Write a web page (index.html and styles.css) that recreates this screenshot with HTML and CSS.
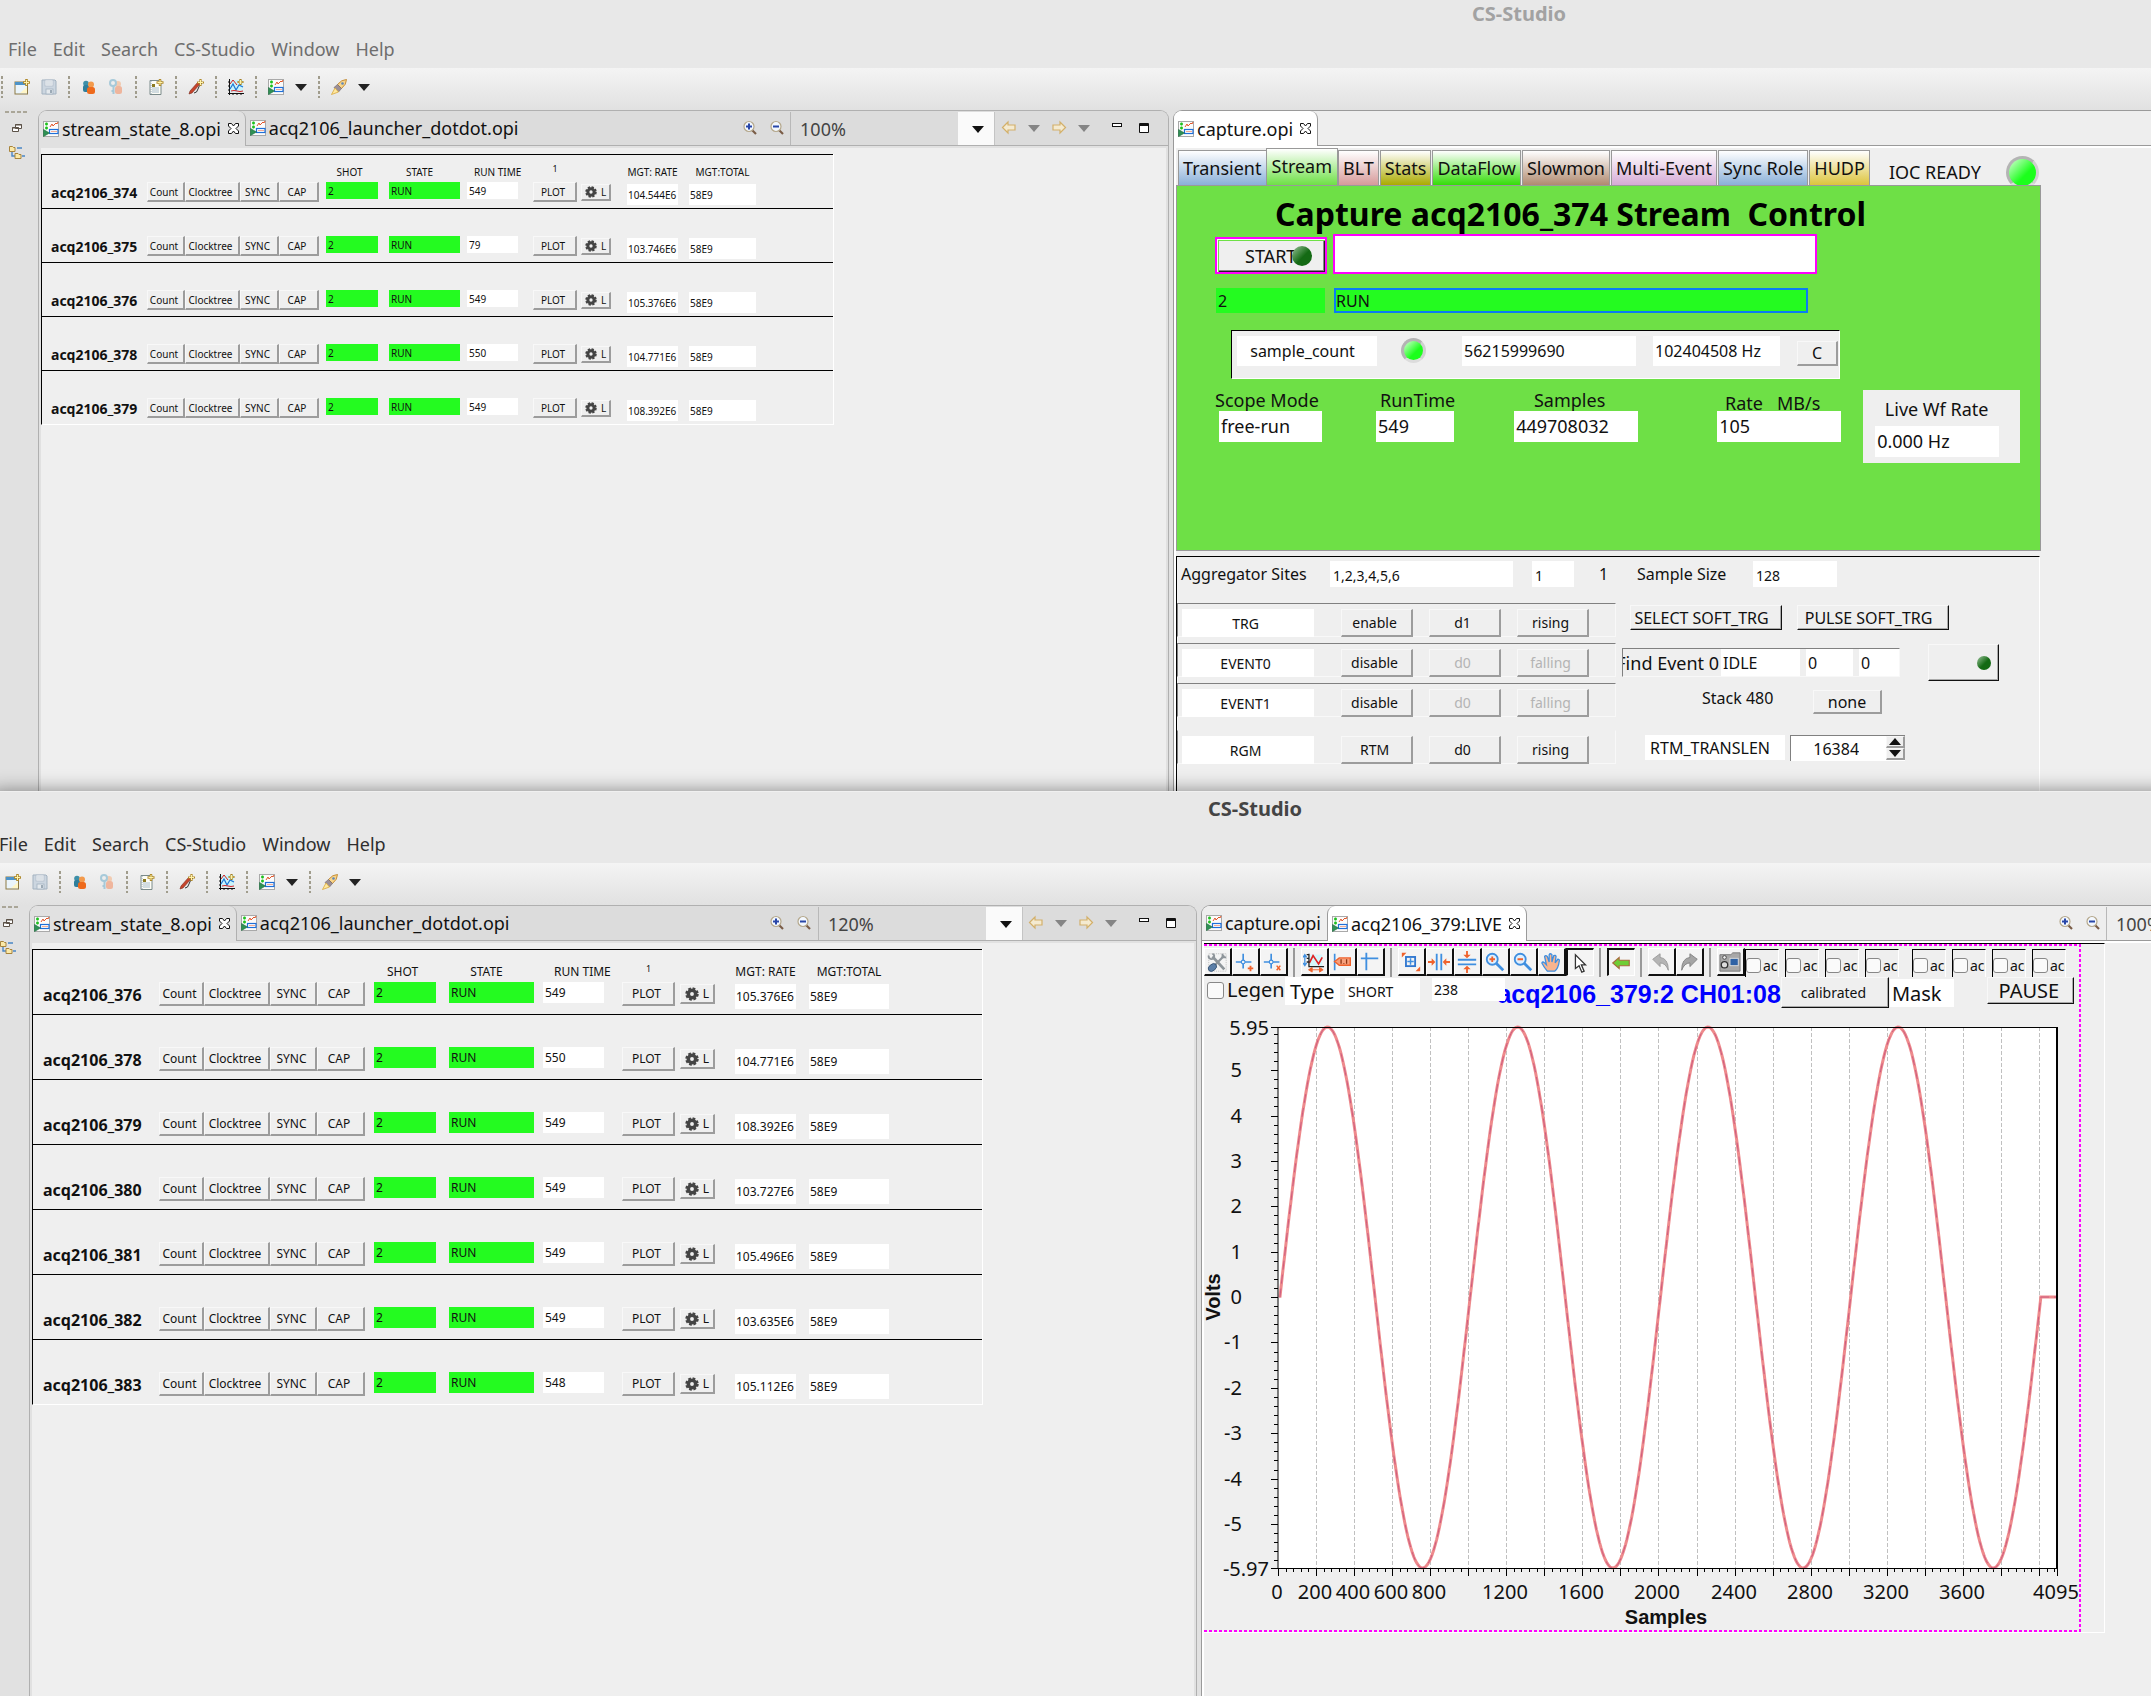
FILE: index.html
```html
<!DOCTYPE html>
<html lang="en">
<head>
<meta charset="UTF-8">
<meta name="viewport" content="width=device-width, initial-scale=1.0">
<title>CS-Studio</title>
<link rel="stylesheet" href="styles.css">
</head>
<body>

<!-- icon sprites -->
<svg class="sprites" aria-hidden="true">
  <symbol id="i-opi" viewBox="0 0 16 16"><rect x=".5" y=".5" width="15" height="15" fill="#fbfbfb" stroke="#a9a9a9"/><path d="M7 6l2-3 1 2 3-3 1 1 1-2" fill="none" stroke="#e2562a" stroke-width="1"/><path d="M2 3h3M3.500 1.500v3M2 7h3M3.500 5.500v3" stroke="#1fc01f" stroke-width="1.600"/><rect x="6.500" y="8.500" width="8.500" height="4" fill="#fff" stroke="#1e6fd8" stroke-width="1.200"/><path d="M8.500 10.500h5" stroke="#e2562a" stroke-dasharray="1 1"/><path d="M.5 8.500v7l6-3.500z" fill="#2e9154" stroke="#1d6b3c" stroke-width=".6"/></symbol>
  <symbol id="i-new" viewBox="0 0 16 16"><rect x="1" y="3" width="12.500" height="12" fill="#eaf4fb" stroke="#8d7a45"/><path d="M1 3h12v3H1z" fill="#4d93c8"/><path d="M6 14l7-6v6z" fill="#fff6c8"/><path d="M12.500 0v7M9 3.500h7" stroke="#b08a2c" stroke-width="2.600"/><path d="M12.500 1v5M10 3.500h5" stroke="#fff3a8" stroke-width="1"/></symbol>
  <symbol id="i-save" viewBox="0 0 16 16"><path d="M1 1h13l1 1v13H1z" fill="#ccd6e0" stroke="#a3b2c0"/><rect x="4" y="1" width="8" height="6" fill="#eef2f5" stroke="#b3bfca" stroke-width=".8"/><path d="M5 3h6M5 5h6" stroke="#b9c4ce" stroke-width=".7"/><rect x="5" y="10" width="7" height="5" fill="#e4e9ed" stroke="#a3b2c0" stroke-width=".8"/><rect x="9" y="11" width="2" height="3" fill="#9caab6"/></symbol>
  <symbol id="i-users" viewBox="0 0 16 16"><circle cx="5" cy="4.500" r="2.800" fill="#3d8fa8"/><rect x="2" y="6" width="6.500" height="7" rx="2" fill="#2f7f9c"/><circle cx="10" cy="5.500" r="3" fill="#f39a4c"/><rect x="6" y="8" width="8" height="7" rx="2.500" fill="#ee6a1c"/></symbol>
  <symbol id="i-userkey" viewBox="0 0 16 16"><g opacity=".6"><circle cx="10" cy="5" r="3" fill="#f5b58a"/><rect x="7" y="7" width="7" height="8" rx="2.500" fill="#f3936a"/><circle cx="5" cy="4" r="3" fill="none" stroke="#79b3cd" stroke-width="2"/><path d="M5.500 7v8M5.500 12h-2" stroke="#79b3cd" stroke-width="2"/></g></symbol>
  <symbol id="i-doc" viewBox="0 0 16 16"><path d="M2 1.500h11v14H2z" fill="#fdfdf6" stroke="#7a8a8a"/><path d="M4 9h7M4 11h7M4 13h7" stroke="#a8bccb"/><rect x="4" y="5" width="3" height="3" fill="#8b7a20"/><path d="M3 2v13" stroke="#9ab" stroke-dasharray="1 1"/><path d="M12 0v7M8.500 3.500h7" stroke="#b08a2c" stroke-width="2.400"/><path d="M12 1v5M9.500 3.500h5" stroke="#fff3a8"/></symbol>
  <symbol id="i-pen" viewBox="0 0 16 16"><path d="M1 15l1-3 8-9 2 2-8 9z" fill="#c6442c" stroke="#7a2a1c" stroke-width=".6"/><path d="M6 14q3 0 4-4t4-6" fill="none" stroke="#333"/><path d="M12.500 0v7M9 3.500h7" stroke="#b08a2c" stroke-width="2.200"/><path d="M12.500 1v5M10 3.500h5" stroke="#fff3a8"/></symbol>
  <symbol id="i-chart" viewBox="0 0 16 16"><rect x="2" y="1" width="13" height="12" fill="#c9f4fb"/><path d="M1.500 0v16M0 14.500h16M0 3h2M0 7h2M0 11h2M5 14v2M9 14v2M13 14v2" stroke="#111"/><path d="M2 5l3-4 4 5" fill="none" stroke="#d81f1f"/><path d="M2 10l3-5 3 6 3-5 4 2" fill="none" stroke="#1b74d6" stroke-width="1.200"/><path d="M3 12q3-1 6 0t6 0" fill="none" stroke="#d81f1f"/><path d="M12.500 0v6M9.500 3h6" stroke="#a37d22" stroke-width="2.200"/><path d="M12.500 1v4M10.500 3h4" stroke="#fff3a8"/></symbol>
  <symbol id="i-rocket" viewBox="0 0 16 16"><path d="M15.500.5q-5 0-9 5l4 4q5-4 5-9z" fill="#f9d58a" stroke="#b77a1f" stroke-width=".8"/><path d="M6.500 5.500L3 8.500 7.500 13l3-3.500z" fill="#9b8f97" stroke="#6d636b" stroke-width=".6"/><path d="M4 9l-3.500 6.500L7.500 13z" fill="#ffe9a0" stroke="#d9a83a" stroke-width=".8"/><circle cx="11.500" cy="4.500" r="1.300" fill="#5d87b8"/></symbol>
  <symbol id="i-tri" viewBox="0 0 12 7"><path d="M0 0h12L6 7z" fill="currentColor"/></symbol>
  <symbol id="i-zin" viewBox="0 0 16 16"><path d="M10 10l4 4" stroke="#7a5c46" stroke-width="2.200"/><circle cx="7" cy="6.500" r="5" fill="#f3f8ff" stroke="#b5a88c" stroke-width="1.200"/><path d="M4 6.500h6M7 3.500v6" stroke="#2846a8" stroke-width="2"/></symbol>
  <symbol id="i-zout" viewBox="0 0 16 16"><path d="M10 10l4 4" stroke="#7a5c46" stroke-width="2.200"/><circle cx="7" cy="6.500" r="5" fill="#f3f8ff" stroke="#b5a88c" stroke-width="1.200"/><path d="M4 6.500h6" stroke="#2846a8" stroke-width="2"/></symbol>
  <symbol id="i-back" viewBox="0 0 16 16"><path d="M1.500 7.500L7 2v3h7v5H7v3z" fill="#f4ead0" stroke="#d3b06a" stroke-width="1.200"/></symbol>
  <symbol id="i-fwd" viewBox="0 0 16 16"><path d="M14.500 7.500L9 2v3H2v5h7v3z" fill="#f4ead0" stroke="#d3b06a" stroke-width="1.200"/></symbol>
  <symbol id="i-min" viewBox="0 0 16 16"><rect x="3.500" y="3.500" width="9" height="3" fill="#fff" stroke="#111"/></symbol>
  <symbol id="i-max" viewBox="0 0 16 16"><path d="M3.500 3.500h9v9h-9z" fill="#fff" stroke="#111"/><path d="M3 5h10" stroke="#111" stroke-width="2"/></symbol>
  <symbol id="i-close" viewBox="0 0 11 11"><path d="M.5.5h3l2 2.500 2-2.500h3v2.500L8 5.500l2.500 2.500v2.500h-3l-2-2.500-2 2.500h-3V8L3 5.500.5 3z" fill="#fff" stroke="#111"/></symbol>
  <symbol id="i-restore" viewBox="0 0 10 10"><path d="M3.500 1.500h6v4h-6zM.5 4.500h6v4h-6z" fill="#fff" stroke="#5c5248"/><path d="M3 2h7M0 5h7" stroke="#5c5248"/></symbol>
  <symbol id="i-tree" viewBox="0 0 16 14"><path d="M3 4v7h3M8 3h5M13 11h3" fill="none" stroke="#4a86c5" stroke-width="1.400"/><path d="M.5 1.500h3l1 1h1.500v4H.5zM6 8.500h3l1 1h2v4H6z" fill="#fbe9a8" stroke="#a8843c"/></symbol>
  <symbol id="i-gear" viewBox="0 0 16 16"><circle cx="8" cy="8" r="4.200" fill="none" stroke="#444" stroke-width="4"/><circle cx="8" cy="8" r="6.500" fill="none" stroke="#444" stroke-width="2.400" stroke-dasharray="3.100 2"/></symbol>
  <!-- graph toolbar -->
  <symbol id="g-tools" viewBox="0 0 24 24"><rect x="3" y="3" width="19" height="19" fill="none" stroke="#bbb" stroke-dasharray="1 1"/><path d="M7 6l13 14" stroke="#8e959a" stroke-width="3"/><path d="M20 5L9 16" stroke="#8e959a" stroke-width="2.400"/><ellipse cx="7" cy="18" rx="5" ry="3.500" transform="rotate(-40 7 18)" fill="#5b7fa8" stroke="#3c5878"/><path d="M3 5a3 3 0 1 0 4-2M18 3v4h4" fill="none" stroke="#8e959a" stroke-width="2"/></symbol>
  <symbol id="g-add" viewBox="0 0 24 24"><path d="M10 3v7M10 14v5M2 12h6M12 12h7" stroke="#3f8fe0" stroke-width="1.800"/><circle cx="10" cy="12" r="2" fill="none" stroke="#3f8fe0" stroke-width="1.200"/><path d="M18 16v6M15 19h6" stroke="#f0622c" stroke-width="2"/></symbol>
  <symbol id="g-del" viewBox="0 0 24 24"><path d="M10 3v7M10 14v5M2 12h6M12 12h7" stroke="#3f8fe0" stroke-width="1.800"/><circle cx="10" cy="12" r="2" fill="none" stroke="#3f8fe0" stroke-width="1.200"/><path d="M16 16l4 5M20 16l-4 5" stroke="#f0622c" stroke-width="1.600"/></symbol>
  <symbol id="g-scale" viewBox="0 0 24 24"><rect x="7" y="4" width="14" height="12" fill="#d4f7fb"/><path d="M7 13l4-8 6 9 4-7" fill="none" stroke="#e02222" stroke-width="1.800"/><path d="M6.500 3v14H23M4 4h2M4 8h2M4 12h2" stroke="#222" fill="none" stroke-width="1.400"/><path d="M2 4v12M0 7l2-3 2 3M0 13l2 3 2-3" fill="none" stroke="#3f8fe0" stroke-width="1.400"/><path d="M8 20.500h12M10 18l-4 2.500 4 2.500zM18 18l4 2.500-4 2.500z" fill="#f0622c" stroke="#f0622c"/></symbol>
  <symbol id="g-label" viewBox="0 0 24 24"><path d="M4 3v18" stroke="#3f8fe0" stroke-width="1.800"/><path d="M4 11.500L9 7.500h12v8H9z" fill="#f7a07c" stroke="#f0622c" stroke-width="1.600"/><path d="M11 9v5M17 9v5M14 13v1" stroke="#8c3310" stroke-width="1.400"/></symbol>
  <symbol id="g-axis" viewBox="0 0 24 24"><path d="M8 2v19M2 8h19" stroke="#3f8fe0" stroke-width="2"/></symbol>
  <symbol id="g-box" viewBox="0 0 24 24"><rect x="6.500" y="6.500" width="10" height="10" fill="none" stroke="#2f77d0" stroke-width="2"/><path d="M11.500 8v7M8 11.500h7" stroke="#3f8fe0" stroke-width="1.600"/><path d="M2 2h5L2 7zM22 22h-5l5-5z" fill="#f0622c"/></symbol>
  <symbol id="g-horz" viewBox="0 0 24 24"><path d="M9.500 3v18M14.500 3v18" stroke="#3f8fe0" stroke-width="2"/><path d="M0 11h4V8l4 4-4 4v-3H0zM24 11h-4V8l-4 4 4 4v-3h4z" fill="#f0622c"/></symbol>
  <symbol id="g-vert" viewBox="0 0 24 24"><path d="M2 9.500h20M2 14.500h20" stroke="#3f8fe0" stroke-width="2"/><path d="M11 0v4H8l4 4 4-4h-3V0zM11 24v-4H8l4-4 4 4h-3v4z" fill="#f0622c"/></symbol>
  <symbol id="g-zin" viewBox="0 0 24 24"><path d="M13 13l8 8" stroke="#3f8fe0" stroke-width="3"/><circle cx="9" cy="9" r="6" fill="#dff0ff" stroke="#3f8fe0" stroke-width="2"/><path d="M6 9h6M9 6v6" stroke="#f0622c" stroke-width="2"/></symbol>
  <symbol id="g-zout" viewBox="0 0 24 24"><path d="M13 13l8 8" stroke="#3f8fe0" stroke-width="3"/><circle cx="9" cy="9" r="6" fill="#dff0ff" stroke="#3f8fe0" stroke-width="2"/><path d="M6 9h6" stroke="#f0622c" stroke-width="2"/></symbol>
  <symbol id="g-hand" viewBox="0 0 24 24"><path d="M8 22q-4-5-6-9 1-2 3 0l2 2-2-9q1-2 3 0l2 6V4q1-2 3 0v8l2-7q2-1 2.500 1L16.500 13l3-4q2 0 1.500 2-1 8-5 11z" fill="#f8b48e" stroke="#3f8fe0" stroke-width="1.400"/></symbol>
  <symbol id="g-cursor" viewBox="0 0 24 24"><path d="M7 3v15l4-3 3 7 2.500-1-3-7H18z" fill="#fff" stroke="#333" stroke-width="1.400"/></symbol>
  <symbol id="g-left" viewBox="0 0 24 24"><path d="M3 12l7-6v3h11v6H10v3z" fill="#6fce35" stroke="#a86a3c" stroke-width="1.200"/></symbol>
  <symbol id="g-undo" viewBox="0 0 24 24"><path d="M3 9l8-6v4q9 1 9 14-3-8-9-8v4z" fill="#b5b5b5" stroke="#999"/></symbol>
  <symbol id="g-redo" viewBox="0 0 24 24"><path d="M21 9l-8-6v4q-9 1-9 14 3-8 9-8v4z" fill="#a5a5a5" stroke="#808080"/></symbol>
  <symbol id="g-cam" viewBox="0 0 24 24"><path d="M1 4h12l2-2h8v20H1z" fill="#a8a8a8" stroke="#777"/><rect x="12" y="8" width="9" height="8" fill="#2e62a5" stroke="#ddd"/><circle cx="6" cy="7" r="2" fill="#eee" stroke="#444"/><circle cx="6" cy="15" r="3.500" fill="#ddd" stroke="#333" stroke-width="1.400"/></symbol>
</svg>

<!-- back window -->
<section class="window win-back">
  <header class="titlebar">CS-Studio</header>
  <nav class="menubar"><a href="#">File</a><a href="#">Edit</a><a href="#">Search</a><a href="#">CS-Studio</a><a href="#">Window</a><a href="#">Help</a></nav>
  <div class="toolbar" data-toolbar></div>
  <div class="workbench">
    <aside class="trim">
      <button class="bare" aria-label="Restore"><svg width="10" height="10"><use href="#i-restore"/></svg></button>
      <button class="bare" aria-label="Navigator"><svg width="16" height="14"><use href="#i-tree"/></svg></button>
    </aside>

    <div class="folder">
      <div class="strip">
        <div class="tab on"><svg width="16" height="16"><use href="#i-opi"/></svg>stream_state_8.opi<button class="bare" aria-label="Close"><svg width="11" height="11"><use href="#i-close"/></svg></button></div>
        <div class="tab"><svg width="16" height="16"><use href="#i-opi"/></svg>acq2106_launcher_dotdot.opi</div>
        <div class="strip-tools" data-tools="100%"></div>
      </div>
      <div class="canvas">
        <table class="states">
          <colgroup><col class="c-name"><col class="c-count"><col class="c-clock"><col class="c-sync"><col class="c-cap"><col class="c-shot"><col class="c-state"><col class="c-time"><col class="c-plot"><col class="c-gear"><col class="c-rate"><col class="c-total"><col class="c-rest"></colgroup>
          <thead><tr><th></th><th></th><th></th><th></th><th></th><th class="shot">SHOT</th><th class="state">STATE</th><th class="time">RUN TIME</th><th class="plot">1</th><th></th><th class="rate">MGT: RATE</th><th class="total">MGT:TOTAL</th><th></th></tr></thead>
          <tbody id="statesBack"></tbody>
        </table>
      </div>
    </div>

    <div class="folder active">
      <div class="strip">
        <div class="tab on"><svg width="16" height="16"><use href="#i-opi"/></svg>capture.opi<button class="bare" aria-label="Close"><svg width="11" height="11"><use href="#i-close"/></svg></button></div>
        <div class="strip-tools"></div>
      </div>
      <div class="canvas capture">
        <div class="opi-tabs">
          <button class="t-blue">Transient</button><button class="t-stream">Stream</button><button class="t-blt">BLT</button><button class="t-stats">Stats</button><button class="t-flow">DataFlow</button><button class="t-slow">Slowmon</button><button class="t-multi">Multi-Event</button><button class="t-blue">Sync Role</button><button class="t-hudp">HUDP</button>
          <span class="ioc">IOC READY</span><i class="led led-33"></i>
        </div>
        <div class="stream">
          <h1>Capture acq2106_374 Stream&nbsp; Control</h1>
          <div class="row row-start">
            <button class="start">START<i class="led dark led-20"></i></button>
            <input class="message" type="text" aria-label="Message">
          </div>
          <div class="row row-run"><span class="run-shot">2</span><span class="run-state">RUN</span></div>
          <div class="counter">
            <span class="field w140 center">sample_count</span>
            <i class="led led-25"></i>
            <span class="field w174">56215999690</span>
            <span class="field w127">102404508 Hz</span>
            <button class="btn">C</button>
          </div>
          <div class="row row-rates">
            <div class="stack scope"><span>Scope Mode</span><output class="w103">free-run</output></div>
            <div class="stack runtime"><span>RunTime</span><output class="w78">549</output></div>
            <div class="stack samples"><span>Samples</span><output class="w124">449708032</output></div>
            <div class="stack rate-mb"><span>Rate &nbsp; MB/s</span><output class="w124">105</output></div>
            <div class="live"><span>Live Wf Rate</span><output class="w124">0.000 Hz</output></div>
          </div>
        </div>

        <div class="aggregator">
          <div class="agg-top">
            <label class="agg-label" for="sites">Aggregator Sites</label>
            <input class="sites" id="sites" type="text" value="1,2,3,4,5,6">
            <input class="one" type="text" value="1" aria-label="Site">
            <span class="agg-one">1</span>
            <label class="size-label" for="size">Sample Size</label>
            <input class="size" id="size" type="text" value="128">
          </div>
          <div class="agg-body">
            <div class="groups">
              <div class="group"><span>TRG</span><button class="btn">enable</button><button class="btn">d1</button><button class="btn">rising</button></div>
              <div class="group"><span>EVENT0</span><button class="btn">disable</button><button class="btn" disabled>d0</button><button class="btn" disabled>falling</button></div>
              <div class="group"><span>EVENT1</span><button class="btn">disable</button><button class="btn" disabled>d0</button><button class="btn" disabled>falling</button></div>
              <div class="group last"><span>RGM</span><button class="btn">RTM</button><button class="btn">d0</button><button class="btn">rising</button></div>
            </div>
            <div class="triggers">
              <div class="row soft"><button class="btn hard">SELECT SOFT_TRG</button><button class="btn hard">PULSE SOFT_TRG</button></div>
              <div class="row find">
                <div class="find-box"><span class="find-label">Find Event 0</span><span class="w79">IDLE</span><span class="w47">0</span><span class="w40">0</span></div>
                <button class="btn hard find-btn" aria-label="Find"><i class="led dark led-14"></i></button>
              </div>
              <div class="row stack-row"><span>Stack 480</span><button class="btn">none</button></div>
              <div class="row translen">
                <label for="translen">RTM_TRANSLEN</label>
                <div class="spinner"><input id="translen" type="text" value="16384"><div><button class="btn" aria-label="Up"><svg class="up" width="12" height="7"><use href="#i-tri"/></svg></button><button class="btn" aria-label="Down"><svg width="12" height="7"><use href="#i-tri"/></svg></button></div></div>
              </div>
            </div>
          </div>
        </div>
      </div>
    </div>
  </div>
</section>

<!-- front window -->
<section class="window win-front">
  <header class="titlebar">CS-Studio</header>
  <nav class="menubar"><a href="#">File</a><a href="#">Edit</a><a href="#">Search</a><a href="#">CS-Studio</a><a href="#">Window</a><a href="#">Help</a></nav>
  <div class="toolbar" data-toolbar></div>
  <div class="workbench">
    <aside class="trim">
      <button class="bare" aria-label="Restore"><svg width="10" height="10"><use href="#i-restore"/></svg></button>
      <button class="bare" aria-label="Navigator"><svg width="16" height="14"><use href="#i-tree"/></svg></button>
    </aside>

    <div class="folder">
      <div class="strip">
        <div class="tab on"><svg width="16" height="16"><use href="#i-opi"/></svg>stream_state_8.opi<button class="bare" aria-label="Close"><svg width="11" height="11"><use href="#i-close"/></svg></button></div>
        <div class="tab"><svg width="16" height="16"><use href="#i-opi"/></svg>acq2106_launcher_dotdot.opi</div>
        <div class="strip-tools" data-tools="120%"></div>
      </div>
      <div class="canvas">
        <table class="states zoomed">
          <colgroup><col class="c-name"><col class="c-count"><col class="c-clock"><col class="c-sync"><col class="c-cap"><col class="c-shot"><col class="c-state"><col class="c-time"><col class="c-plot"><col class="c-gear"><col class="c-rate"><col class="c-total"><col class="c-rest"></colgroup>
          <thead><tr><th></th><th></th><th></th><th></th><th></th><th class="shot">SHOT</th><th class="state">STATE</th><th class="time">RUN TIME</th><th class="plot">1</th><th></th><th class="rate">MGT: RATE</th><th class="total">MGT:TOTAL</th><th></th></tr></thead>
          <tbody id="statesFront"></tbody>
        </table>
      </div>
    </div>

    <div class="folder active">
      <div class="strip">
        <div class="tab"><svg width="16" height="16"><use href="#i-opi"/></svg>capture.opi</div>
        <div class="tab on"><svg width="16" height="16"><use href="#i-opi"/></svg>acq2106_379:LIVE<button class="bare" aria-label="Close"><svg width="11" height="11"><use href="#i-close"/></svg></button></div>
        <div class="strip-tools" data-tools="100%"></div>
      </div>
      <div class="canvas">
        <div class="live-frame">
          <div class="graph">
            <div class="graph-bar" id="graphBar"></div>
            <div class="graph-head">
              <label class="legend"><input type="checkbox">Legend</label>
              <span class="type">Type</span>
              <span class="short">SHORT</span>
              <span class="n238">238</span>
              <h2>acq2106_379:2 CH01:08</h2>
              <button class="btn hard calibrated">calibrated</button>
              <span class="mask">Mask</span>
              <button class="btn hard pause">PAUSE</button>
            </div>
            <svg id="wave" class="wave" width="876" height="620" viewBox="0 0 876 620"></svg>
          </div>
        </div>
      </div>
    </div>
  </div>
</section>

<script src="app.js"></script>
</body>
</html>
```
FILE: styles.css
```css
* {
  box-sizing: border-box;
}
body {
  margin: 0;
  height: 100vh;
  overflow: hidden;
  display: flex;
  flex-direction: column;
  background-color: #e1e1e1;
  font-family: "Noto Sans", sans-serif;
  font-size: 18px;
  color: #111;
}
button, input, select {
  font: inherit;
  color: inherit;
  margin: 0;
  padding: 0;
  border: none;
  border-radius: 0;
  background: none;
}
svg {
  display: block;
  flex: none;
}
.sprites {
  position: absolute;
  width: 0;
  height: 0;
}
.bare {
  display: flex;
  align-items: center;
  justify-content: center;
}

/* windows */
.window {
  display: flex;
  flex-direction: column;
  background-color: #e8e8e8;
}
.win-back {
  flex: 0 0 795px;
  width: calc(100% + 887px);
  margin-top: -3px;
  overflow: hidden;
}
.win-front {
  flex: 1;
  width: calc(100% + 377px);
  margin-left: -9px;
  position: relative;
  min-height: 0;
  border-top: 1px solid #f0f0f0;
  margin-top: -1px;
  box-shadow: 0 0 18px rgba(0, 0, 0, 0.45);
}
.titlebar {
  height: 35px;
  line-height: 34px;
  text-align: center;
  font-size: 20px;
  font-weight: bold;
  color: #444;
}
.menubar {
  display: flex;
  gap: 16px;
  height: 36px;
  padding-left: 8px;
  line-height: 34px;
}
.menubar a {
  color: #2e2e2e;
  text-decoration: none;
}
.win-back .titlebar {
  color: #a2a2a2;
}
.win-back .menubar a {
  color: #6e6e6e;
}
.toolbar {
  display: flex;
  align-items: center;
  height: 42px;
  padding-bottom: 4px;
  background: linear-gradient(#f4f4f4, #e1e1e1);
}
.tool {
  width: 27px;
  height: 27px;
}
.tool.narrow {
  width: 23px;
  color: #222;
}
.strip-tools .tool.narrow {
  color: #858585;
}
.sep {
  width: 13px;
  height: 22px;
  background: repeating-linear-gradient(#a09c8c 0 3px, transparent 3px 5px) center / 2px 100% no-repeat;
}
.toolbar .sep:first-child {
  width: 8px;
  background-position: 1px 0;
}

/* workbench */
.workbench {
  flex: 1;
  min-height: 0;
  display: grid;
  grid-template-columns: 38px 37.23% 1fr 34px;
  background-color: #e1e1e1;
}
.win-front .workbench {
  grid-template-columns: 38px 46.2% 1fr 34px;
}
.trim {
  display: flex;
  flex-direction: column;
  gap: 12px;
  padding: 13px 0 0 9px;
  background: repeating-linear-gradient(90deg, #aaa698 0 4px, transparent 4px 6px) 5px 1px / 24px 2px no-repeat;
}
.trim .bare {
  width: 16px;
}
.folder {
  display: flex;
  flex-direction: column;
  min-width: 0;
  min-height: 0;
  border: 1px solid #b0b0b0;
  border-bottom: none;
  border-radius: 9px 9px 0 0;
  background-color: #e1e1e1;
  overflow: hidden;
}
.folder.active {
  margin-left: 4px;
  border-color: #9a9a9a;
  background-color: #fff;
}
.strip {
  display: flex;
  height: 35px;
  flex: none;
  background-color: #dcdcdc;
}
.active .strip {
  background-color: #eeeeee;
}
.tab {
  display: flex;
  align-items: center;
  gap: 3px;
  padding: 0 6px 0 4px;
  border-bottom: 1px solid #b0b0b0;
}
.tab .bare {
  width: 11px;
  margin-left: 4px;
}
.tab.on {
  border-right: 1px solid #b0b0b0;
  border-bottom: none;
  border-radius: 0 8px 0 0;
  background-color: #e1e1e1;
}
.active .tab {
  border-color: #9a9a9a;
}
.active .tab.on {
  background-color: #fff;
}
.tab + .tab.on {
  border-left: 1px solid #9a9a9a;
  border-radius: 8px 8px 0 0;
}
.strip-tools {
  flex: 1;
  display: flex;
  align-items: center;
  justify-content: flex-end;
  padding-right: 11px;
  border-bottom: 1px solid #b0b0b0;
}
.active .strip-tools {
  border-color: #9a9a9a;
}
.combo {
  position: relative;
  height: 100%;
}
.combo select {
  appearance: none;
  width: 205px;
  height: 33px;
  margin-top: 1px;
  padding-left: 9px;
  border-left: 1px solid #b8b8b8;
  border-right: 1px solid #c4c4c4;
  color: #444;
  background: linear-gradient(#fafafa, #fafafa) right / 36px 100% no-repeat;
}
.combo svg {
  position: absolute;
  right: 11px;
  top: 15px;
  pointer-events: none;
}
.gap-8 {
  margin-left: 8px;
}
.canvas {
  flex: 1;
  min-height: 0;
  margin: 2px 2px 0;
  background-color: #efefef;
  overflow: hidden;
}

/* stream state table */
.states {
  --name: 105px; --count: 38px; --clock: 55px; --sync: 39px; --cap: 40px;
  --shot: 59px; --state: 82px; --time: 58px; --plot: 59px; --gear: 34px;
  --rate: 67px; --total: 78px; --rest: 77px;
  --p-shot: 7px; --p-state: 11px; --p-time: 7px; --p-plot: 15px; --p-gear: 4px;
  --p-rate: 16px; --p-total: 11px;
  --row: 54px; --head: 27px; --first: 26px;
  --field: 17px; --button: 20px; --cog: 17px; --wide: 21px;
  width: 1px;
  margin-top: 6px;
  table-layout: fixed;
  border-collapse: separate;
  border-spacing: 0;
  border-left: 1px solid #000;
  border-right: 1px solid #fff;
  border-bottom: 1px solid #fff;
  font-size: 10px;
}
.states.zoomed {
  --name: 126px; --count: 45px; --clock: 66px; --sync: 47px; --cap: 48px;
  --shot: 71px; --state: 98px; --time: 70px; --plot: 71px; --gear: 40px;
  --rate: 81px; --total: 93px; --rest: 93px;
  --p-shot: 9px; --p-state: 13px; --p-time: 9px; --p-plot: 18px; --p-gear: 5px;
  --p-rate: 20px; --p-total: 13px;
  --row: 65px; --head: 32px; --first: 32px;
  --field: 21px; --button: 24px; --cog: 20px; --wide: 25px;
  font-size: 12px;
}
.c-name { width: var(--name); }
.c-count { width: var(--count); }
.c-clock { width: var(--clock); }
.c-sync { width: var(--sync); }
.c-cap { width: var(--cap); }
.c-shot { width: var(--shot); }
.c-state { width: var(--state); }
.c-time { width: var(--time); }
.c-plot { width: var(--plot); }
.c-gear { width: var(--gear); }
.c-rate { width: var(--rate); }
.c-total { width: var(--total); }
.c-rest { width: var(--rest); }
.states th, .states td {
  padding: 0;
  font-weight: normal;
  white-space: nowrap;
}
.states th {
  height: calc(var(--head) + 1px);
  border-top: 1px solid #000;
  padding-bottom: 3px;
  line-height: 14px;
  vertical-align: bottom;
}
.states td {
  height: var(--row);
  padding-top: var(--head);
  border-top: 1px solid #000;
  vertical-align: top;
}
.states tr.first td {
  height: var(--first);
  padding-top: 0;
  border-top: none;
}
.states .shot { padding-left: var(--p-shot); }
.states .state { padding-left: var(--p-state); }
.states .time { padding-left: var(--p-time); }
.states .plot { padding-left: var(--p-plot); }
.states .gear { padding-left: var(--p-gear); }
.states .rate { padding-left: var(--p-rate); }
.states .total { padding-left: var(--p-total); }
.states th.shot { padding-right: 5px; }
.states th.state { padding-right: 10px; }
.states th.time { padding-left: 14px; }
.states.zoomed th.time { padding-left: 20px; }
.states th.plot {
  padding-bottom: 6px;
  font-size: 9px;
}
.states .name {
  padding-left: 9px;
  font-size: 14px;
  font-weight: bold;
  line-height: 22px;
}
.states.zoomed .name {
  padding-left: 10px;
  font-size: 16px;
  line-height: 26px;
}
.states td > * {
  display: flex;
  width: 100%;
  height: var(--button);
  align-items: center;
  justify-content: center;
}
.states td > .btn {
  padding-right: 3px;
}
.states td > .lamp, .states td > .value {
  height: var(--field);
  padding-left: 2px;
  justify-content: flex-start;
  background-color: #fff;
}
.states td > .lamp {
  background-color: #24fb20;
}
.states td > .wide {
  height: var(--wide);
  margin-top: 2px;
  padding-left: 1px;
}
.states td > .cog {
  height: var(--cog);
  margin-top: 2px;
  padding-right: 0;
  gap: 4px;
}
.cog svg {
  width: 12px;
  height: 12px;
}
.zoomed .cog svg {
  width: 14px;
  height: 14px;
}
.btn {
  border: 1px solid #f8f8f8;
  border-right: 2px solid #9c9c9c;
  border-bottom: 2px solid #9c9c9c;
  background-color: #efefef;
  color: #111;
  text-align: center;
}
.btn.hard {
  border-right: 1px solid #111;
  border-bottom: 1px solid #111;
  box-shadow: inset -1px -1px #aaa;
}
.btn:disabled {
  color: #b4b4b4;
}

/* leds */
.led {
  display: block;
  flex: none;
  width: 25px;
  height: 25px;
  border: 3px solid #b4b4b4;
  border-bottom-color: #dcdcdc;
  border-right-color: #d0d0d0;
  border-radius: 50%;
  background: linear-gradient(135deg, #d8ffd8, #1cff1c 60%);
}
.led.dark {
  border: none;
  background: linear-gradient(135deg, #9cc49c, #146a14 55%);
}
.led-33 { width: 33px; height: 33px; }
.led-20 { width: 20px; height: 20px; }
.led-14 { width: 14px; height: 14px; }

/* capture tabs */
.opi-tabs {
  display: flex;
  align-items: flex-end;
  gap: 1px;
  height: 37px;
  padding-left: 2px;
  overflow: hidden;
}
.opi-tabs button {
  flex: none;
  height: 35px;
  padding: 0 4px;
  border: 1px solid #999;
  border-bottom: none;
  background: linear-gradient(#fff, #8ab0d8);
}
.opi-tabs .t-stream {
  height: 37px;
  margin: 0 -1px 0 -2px;
  padding: 0 5px 2px;
  background: linear-gradient(#fff, #6ee046);
}
.opi-tabs .t-blt { background: linear-gradient(#fff, #d69a9a); }
.opi-tabs .t-stats { background: linear-gradient(#fff, #aaaa00); }
.opi-tabs .t-flow { background: linear-gradient(#fff, #34dd08); }
.opi-tabs .t-slow { background: linear-gradient(#fff, #b08a70); }
.opi-tabs .t-multi { background: linear-gradient(#fff, #d6aad6); }
.opi-tabs .t-hudp { background: linear-gradient(#fff, #dcc43c); }
.ioc {
  padding-left: 18px;
  width: 134px;
  line-height: 26px;
}
.opi-tabs .led {
  margin-bottom: -4px;
}

/* stream panel */
.stream {
  width: 865px;
  height: 366px;
  padding-top: 7px;
  border: 1px solid #999;
  background-color: #6ee046;
}
.stream h1 {
  margin: 0;
  padding-left: 98px;
  font-size: 32px;
  line-height: 41px;
  color: #000;
}
.row {
  display: flex;
}
.row-start {
  align-items: flex-end;
  gap: 6px;
  padding-left: 38px;
}
.start {
  display: flex;
  align-items: center;
  width: 112px;
  height: 37px;
  padding-left: 28px;
  border: 2px solid #f0f;
  background-color: #efefef;
  box-shadow: inset 1px 1px #fff, inset 2px 2px #6ee046, inset -1px -1px #222, inset -2px -2px #888;
}
.start .led {
  margin-left: -4px;
}
.message {
  width: 484px;
  height: 40px;
  padding: 0 4px;
  border: 2px solid #f0f;
  background-color: #fff;
}
.row-run {
  gap: 9px;
  margin: 14px 0 17px 39px;
  font-size: 16px;
  line-height: 26px;
}
.run-shot, .run-state {
  width: 109px;
  height: 25px;
  padding-left: 2px;
  background-color: #24fb20;
}
.run-state {
  width: 474px;
  padding-left: 0;
  border: 2px solid #0a7cf5;
  line-height: 23px;
}
.counter {
  display: flex;
  align-items: flex-start;
  width: 609px;
  height: 49px;
  margin-left: 54px;
  padding: 5px 0 0 5px;
  border: 1px solid #fff;
  border-top-color: #000;
  border-left-color: #000;
  background-color: #efefef;
  font-size: 16px;
}
.field {
  height: 30px;
  padding-left: 2px;
  line-height: 30px;
  background-color: #fff;
}
.center {
  padding-right: 11px;
  text-align: center;
}
.counter .led {
  margin: 2px 36px 0 24px;
}
.counter .w127 {
  margin: 0 17px;
}
.counter .btn {
  width: 41px;
  height: 25px;
  margin-top: 5px;
}
.w140 { width: 140px; }
.w174 { width: 174px; }
.w127 { width: 127px; }
.w103 { width: 103px; }
.w78 { width: 78px; }
.w124 { width: 124px; }
.w79 { width: 79px; }
.w47 { width: 47px; }
.w40 { width: 40px; }
.row-rates {
  align-items: flex-start;
  padding: 11px 0 0 38px;
}
.stack span {
  display: block;
  height: 21px;
  line-height: 20px;
  text-align: center;
  white-space: nowrap;
}
output {
  display: block;
  height: 31px;
  padding-left: 2px;
  line-height: 31px;
  background-color: #fff;
}
.scope span {
  width: 103px;
}
.scope output {
  margin-left: 4px;
}
.stack.runtime {
  margin-left: 54px;
}
.runtime span {
  padding-left: 4px;
}
.stack.samples {
  margin-left: 59px;
}
.samples span, .rate-mb span {
  padding-right: 13px;
}
.stack.rate-mb {
  margin-left: 79px;
}
.rate-mb span {
  line-height: 26px;
}
.live {
  width: 157px;
  height: 73px;
  margin-left: 22px;
  padding: 6px 12px 0;
  text-align: center;
  background-color: #efefef;
}
.live span {
  display: block;
  padding: 0 10px 3px 0;
  line-height: 27px;
}
.live output {
  text-align: left;
}

/* aggregator panel */
.aggregator {
  width: 864px;
  height: 300px;
  margin-top: 5px;
  border-top: 1px solid #000;
  border-left: 1px solid #000;
  border-right: 1px solid #fff;
  font-size: 16px;
}
.agg-top {
  display: flex;
  align-items: center;
  height: 26px;
  margin: 4px 0 16px;
  padding-left: 4px;
}
.agg-top input {
  height: 26px;
  padding: 2px 3px 0;
  background-color: #fff;
  font-size: 14px;
}
.agg-label { width: 149px; }
.agg-top .sites { width: 183px; margin-right: 19px; }
.agg-top .one { width: 42px; }
.agg-one { width: 63px; padding-left: 25px; }
.size-label { width: 116px; }
.agg-top .size { width: 84px; }
.agg-body {
  display: flex;
  gap: 6px;
}
.group {
  display: flex;
  width: 439px;
  height: 34px;
  margin-bottom: 6px;
  padding: 5px 0 0 4px;
  border: 1px solid #f8f8f8;
  border-top-color: #808080;
  border-left-color: #808080;
  font-size: 14px;
}
.group.last {
  margin-top: 13px;
  border-top-color: transparent;
}
.group span {
  width: 132px;
  height: 28px;
  margin-right: 11px;
  padding-right: 5px;
  line-height: 29px;
  text-align: center;
  background-color: #fff;
}
.group .btn {
  width: 72px;
  height: 28px;
  margin-left: 16px;
  padding-right: 4px;
}
.triggers .soft {
  gap: 15px;
  padding: 2px 0 0 8px;
}
.soft .btn {
  width: 152px;
  height: 25px;
  line-height: 20px;
  padding-right: 9px;
}
.find {
  align-items: center;
  gap: 28px;
  margin-top: 14px;
}
.find-box {
  display: flex;
  width: 278px;
  height: 29px;
  gap: 6px;
  border: 1px solid #f8f8f8;
  border-top-color: #808080;
  border-left-color: #808080;
  line-height: 29px;
}
.find-box span {
  padding-left: 2px;
  background-color: #fff;
}
.find-box .find-label {
  display: flex;
  justify-content: flex-end;
  width: 98px;
  margin-right: -6px;
  padding-right: 2px;
  overflow: hidden;
  white-space: nowrap;
  font-size: 18px;
  background: none;
}
.find-btn {
  display: flex;
  align-items: center;
  justify-content: flex-end;
  width: 71px;
  height: 37px;
  padding-right: 7px;
}
.stack-row {
  margin-top: 9px;
  padding-left: 80px;
}
.stack-row span {
  width: 111px;
  line-height: 16px;
}
.stack-row .btn {
  width: 69px;
  height: 24px;
  line-height: 20px;
}
.translen {
  gap: 5px;
  margin-top: 21px;
  padding-left: 23px;
}
.translen label {
  width: 140px;
  height: 25px;
  padding-left: 5px;
  line-height: 26px;
  background-color: #fff;
}
.spinner {
  display: flex;
  width: 115px;
  height: 26px;
  border-top: 1px solid #808080;
  border-left: 1px solid #808080;
  background-color: #fff;
}
.spinner input {
  width: 95px;
  padding-right: 27px;
  text-align: right;
}
.spinner .btn {
  display: flex;
  align-items: center;
  justify-content: center;
  width: 19px;
  height: 12px;
}
.up {
  transform: rotate(180deg);
}

/* live graph */
.live-frame {
  width: 901px;
  height: 690px;
  border-top: 1px solid #000;
  border-right: 1px solid #fff;
  border-bottom: 1px solid #fff;
}
.graph {
  --dots: #f0f 0 3px, transparent 3px 5px;
  width: 877px;
  height: 688px;
  padding-top: 2px;
  background:
    repeating-linear-gradient(90deg, var(--dots)) top / 100% 2px no-repeat,
    repeating-linear-gradient(90deg, var(--dots)) bottom / 100% 2px no-repeat,
    repeating-linear-gradient(var(--dots)) right / 2px 100% no-repeat;
  overflow: hidden;
}
.graph-bar {
  display: flex;
  padding-top: 2px;
}
.g {
  display: flex;
  align-items: center;
  justify-content: center;
  width: 28px;
  height: 28px;
  border: 1px solid #fff;
  border-right: 2px solid #111;
  border-bottom: 2px solid #111;
  background-color: #f4f4f4;
}
.g.down {
  border: 1px solid #fff;
  border-top: 2px solid #111;
  border-left: 2px solid #111;
}
.g-sep {
  width: 13px;
  background: linear-gradient(#999, #999) center / 2px 100% no-repeat;
}
.ac {
  display: flex;
  align-items: center;
  gap: 2px;
  width: 34px;
  height: 28px;
  margin: 1px 6px 0 0;
  padding-top: 3px;
  border-top: 1px solid #000;
  border-left: 1px solid #000;
  border-right: 1px solid #fff;
  overflow: hidden;
  font-size: 14px;
}
.ac.split {
  margin-left: 7px;
}
.ac input, .legend input {
  appearance: none;
  flex: none;
  width: 15px;
  height: 15px;
  border: 1px solid #888;
  border-radius: 3px;
  background-color: #fafafa;
}
.graph-head {
  display: flex;
  align-items: flex-start;
  height: 32px;
  font-size: 20px;
}
.legend {
  display: flex;
  align-items: center;
  gap: 3px;
  width: 81px;
  height: 24px;
  padding-left: 3px;
  overflow: hidden;
}
.legend input {
  width: 17px;
  height: 17px;
  margin-top: 2px;
}
.type {
  width: 55px;
  height: 28px;
  padding-left: 5px;
  line-height: 30px;
  background-color: #fff;
}
.short, .n238 {
  width: 75px;
  height: 24px;
  margin: 1px 0 0 5px;
  padding-left: 3px;
  line-height: 28px;
  background-color: #fff;
  font-size: 14px;
}
.n238 {
  position: relative;
  z-index: 1;
  width: 73px;
  height: 23px;
  margin-left: 12px;
  padding-left: 2px;
  line-height: 24px;
}
.graph-head h2 {
  width: 289px;
  margin: 0 0 0 -13px;
  font: bold 25px/35px "Liberation Sans", Arial, sans-serif;
  white-space: nowrap;
  text-align: right;
  color: #00f;
}
.calibrated {
  width: 108px;
  height: 31px;
  padding-right: 3px;
  font-size: 14px;
}
.mask {
  width: 64px;
  height: 28px;
  margin: 2px 33px 0 1px;
  padding-left: 2px;
  line-height: 29px;
  background-color: #fff;
}
.pause {
  width: 87px;
  height: 27px;
  padding-right: 3px;
  line-height: 24px;
}
.wave text {
  font-size: 20px;
  fill: #111;
}
.wave .axis-name {
  font-family: "Liberation Sans", Arial, sans-serif;
  font-weight: bold;
}
```
FILE: app.js
```js
function icon(id, w, h) {
  return '<svg width="' + w + '" height="' + (h || w) + '"><use href="#' + id + '"/></svg>';
}
function tool(id, label) {
  return '<button class="bare tool" aria-label="' + label + '">' + icon(id, 16) + '</button>';
}
function arrow() {
  return '<button class="bare tool narrow" aria-label="More">' + icon('i-tri', 12, 7) + '</button>';
}
var sep = '<span class="sep"></span>';

// main toolbars
document.querySelectorAll('[data-toolbar]').forEach(function(bar) {
  bar.innerHTML = sep + tool('i-new', 'New') + tool('i-save', 'Save') + sep +
    tool('i-users', 'Log in') + tool('i-userkey', 'Log out') + sep +
    tool('i-doc', 'New log') + sep + tool('i-pen', 'Probe') + sep +
    tool('i-chart', 'Data browser') + sep + tool('i-opi', 'Run OPI') + arrow() + sep +
    tool('i-rocket', 'Launch') + arrow();
});

// view toolbars at the right of the tab strips
document.querySelectorAll('[data-tools]').forEach(function(el) {
  el.innerHTML = tool('i-zin', 'Zoom in') + tool('i-zout', 'Zoom out') +
    '<span class="combo"><select aria-label="Zoom"><option>' + el.dataset.tools + '</option></select>' +
    icon('i-tri', 12, 7) + '</span>' +
    tool('i-back', 'Back') + arrow() + tool('i-fwd', 'Forward') + arrow() +
    '<span class="gap-8"></span>' + tool('i-min', 'Minimize') + tool('i-max', 'Maximize');
});

// stream state rows: name, run time, rate
function fillStates(id, rows) {
  document.getElementById(id).innerHTML = rows.map(function(r, i) {
    return '<tr' + (i === 0 ? ' class="first"' : '') + '>' +
      '<td class="name">acq2106_' + r[0] + '</td>' +
      '<td><button class="btn">Count</button></td>' +
      '<td><button class="btn">Clocktree</button></td>' +
      '<td><button class="btn">SYNC</button></td>' +
      '<td><button class="btn">CAP</button></td>' +
      '<td class="shot"><span class="lamp">2</span></td>' +
      '<td class="state"><span class="lamp">RUN</span></td>' +
      '<td class="time"><span class="value">' + r[1] + '</span></td>' +
      '<td class="plot"><button class="btn">PLOT</button></td>' +
      '<td class="gear"><button class="btn cog">' + icon('i-gear', 12) + 'L</button></td>' +
      '<td class="rate"><span class="value wide">' + r[2] + 'E6</span></td>' +
      '<td class="total"><span class="value wide">58E9</span></td><td></td></tr>';
  }).join('');
}
fillStates('statesBack', [
  [374, 549, '104.544'], [375, 79, '103.746'], [376, 549, '105.376'],
  [378, 550, '104.771'], [379, 549, '108.392']
]);
fillStates('statesFront', [
  [376, 549, '105.376'], [378, 550, '104.771'], [379, 549, '108.392'],
  [380, 549, '103.727'], [381, 549, '105.496'], [382, 549, '103.635'],
  [383, 548, '105.112']
]);

// graph toolbar
var groups = [['tools', 'add', 'del'], ['scale', 'label', 'axis'],
  ['box', 'horz', 'vert', 'zin', 'zout', 'hand', 'cursor'], ['left'], ['undo', 'redo'], ['cam']];
var bar = groups.map(function(g) {
  return g.map(function(n) {
    var down = n === 'cursor' || n === 'left' ? ' down' : '';
    return '<button class="g' + down + '" aria-label="' + n + '">' + icon('g-' + n, 22) + '</button>';
  }).join('');
}).join('<span class="g-sep"></span>');
for (var c = 0; c < 8; c++) {
  bar += '<label class="ac' + (c === 4 ? ' split' : '') + '"><input type="checkbox">acq</label>';
}
document.getElementById('graphBar').innerHTML = bar;

// waveform
var L = 74, R = 853, T = 18, B = 559, MAX = 5.95, MIN = -5.97, N = 4095;
function px(v) { return L + v / N * (R - L); }
function py(v) { return T + (MAX - v) / (MAX - MIN) * (B - T); }
function line(x1, y1, x2, y2, extra) {
  return '<line x1="' + x1 + '" y1="' + y1 + '" x2="' + x2 + '" y2="' + y2 + '" ' + (extra || 'stroke="#000"') + '/>';
}
function text(x, y, s, anchor) {
  return '<text x="' + x + '" y="' + y + '" text-anchor="' + anchor + '">' + s + '</text>';
}
var out = '<rect x="' + L + '" y="' + T + '" width="' + (R - L) + '" height="' + (B - T) + '" fill="#fff"/>';
var v, x, y;
for (v = 0; v <= N; v += 40) {
  x = Math.round(px(v)) + 0.5;
  if (v % 200 === 0) {
    if (v) out += line(x, T, x, B, 'stroke="#c0c0c0" stroke-dasharray="4 2"');
    out += line(x, B, x, B + 8);
  } else {
    out += line(x, B, x, B + 4);
  }
}
out += line(R + 0.5, B, R + 0.5, B + 8);
for (v = -29; v <= 29; v++) {
  y = Math.round(py(v / 5)) + 0.5;
  out += line(v % 5 === 0 ? L - 7 : L - 4, y, L, y);
}
out += line(L - 7, T + 0.5, L, T + 0.5) + line(L - 7, B + 0.5, L, B + 0.5);
for (v = -5; v <= 5; v++) {
  out += text(38, Math.round(py(v)) + 7, v, 'end');
}
out += text(65, T + 8, '5.95', 'end') + text(65, B + 8, '-5.97', 'end');
[0, 200, 400, 600, 800, 1200, 1600, 2000, 2400, 2800, 3200, 3600, 4095].forEach(function(n) {
  out += text(Math.round(px(n)) - 1, B + 31, n, 'middle');
});
var pts = [];
for (v = 10; v <= 4010; v += 8) {
  pts.push(px(v).toFixed(1) + ',' + py(-0.01 + 5.96 * Math.sin((v - 10) / 1000 * 2 * Math.PI)).toFixed(1));
}
pts.push(px(4010).toFixed(1) + ',' + py(0), R + ',' + py(0));
out += '<polyline points="' + pts.join(' ') + '" fill="none" stroke="#ee8a8c" stroke-width="3"/>';
out += '<polyline points="' + pts.join(' ') + '" fill="none" stroke="#cc5c80" stroke-width="1" stroke-dasharray="9 5"/>';
out += '<path d="M' + L + ' ' + B + '.5V' + T + '.5H' + R + '" fill="none" stroke="#000"/>';
out += line(L, B + 0.5, R, B + 0.5) + line(R, T, R, B + 1, 'stroke="#000" stroke-width="2"');
out += '<text class="axis-name" x="462" y="615" text-anchor="middle">Samples</text>';
out += '<text class="axis-name" transform="translate(16 288) rotate(-90)" text-anchor="middle">Volts</text>';
document.getElementById('wave').innerHTML = out;
```
